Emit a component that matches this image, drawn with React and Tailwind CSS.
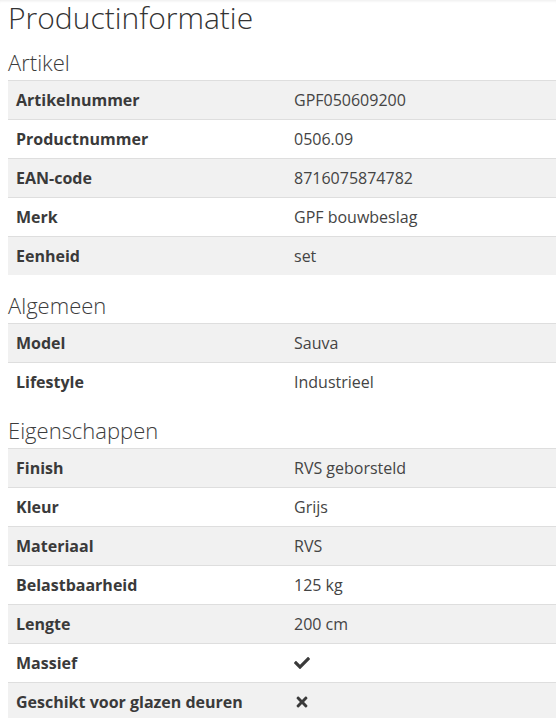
import React from "react";
import {FaCheck, FaTimes} from "react-icons/fa";

const sections = [
    {
        title: "Artikel",
        gap: "mt-[14px]",
        rows: [
            ["Artikelnummer", "GPF050609200"],
            ["Productnummer", "0506.09"],
            ["EAN-code", "8716075874782"],
            ["Merk", "GPF bouwbeslag"],
            ["Eenheid", "set"],
        ],
    },
    {
        title: "Algemeen",
        gap: "mt-[18px]",
        rows: [
            ["Model", "Sauva"],
            ["Lifestyle", "Industrieel"],
        ],
    },
    {
        title: "Eigenschappen",
        gap: "mt-[17px]",
        rows: [
            ["Finish", "RVS geborsteld"],
            ["Kleur", "Grijs"],
            ["Materiaal", "RVS"],
            ["Belastbaarheid", "125 kg"],
            ["Lengte", "200 cm"],
            ["Massief", true],
            ["Geschikt voor glazen deuren", false],
        ],
    },
];

function Value({value}) {
    if (value === true) return <FaCheck className="w-[16px] h-[16px] text-[#3a3a3a]"/>;
    if (value === false) return <FaTimes className="w-[14px] h-[16px] text-[#3a3a3a] ml-[1px]"/>;
    return <span>{value}</span>;
}

export default function App() {
    return (
        <div
            className="w-[556px] h-[718px] overflow-hidden bg-white pl-2 shadow-[inset_0_3px_3px_-2px_rgba(0,0,0,0.08)]"
            style={{fontFamily: '"Open Sans", sans-serif'}}
        >
            <h1 className="text-[30px] font-light leading-[36px] text-[#333]">Productinformatie</h1>
            {sections.map((section) => (
                <div key={section.title}>
                    <h2 className={`text-[22px] font-light leading-[24px] text-[#3c3c3c] mb-[6px] ${section.gap}`}>
                        {section.title}
                    </h2>
                    <div className="flex flex-col">
                        {section.rows.map(([label, value], i) => (
                            <div
                                key={label}
                                className={`flex items-center h-[39px] border-t border-[#dedede] text-[16px] ${i % 2 === 0 ? "bg-[#f1f1f1]" : "bg-white"}`}
                            >
                                <div className="w-[278px] pl-2 font-bold text-[#3a3a3a]">{label}</div>
                                <div className="flex-1 pl-2 text-[#444]">
                                    <Value value={value}/>
                                </div>
                            </div>
                        ))}
                    </div>
                </div>
            ))}
        </div>
    );
}
